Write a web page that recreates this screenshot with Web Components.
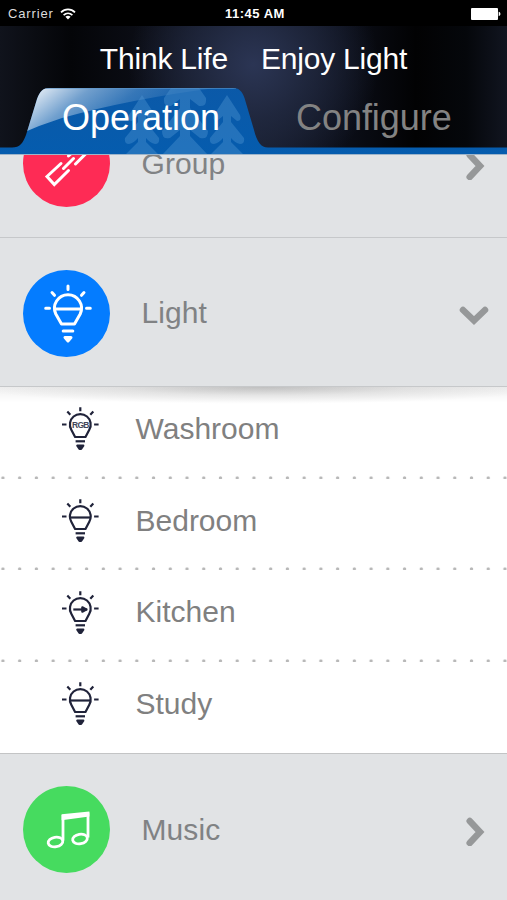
<!DOCTYPE html>
<html lang="en">
<head>
<meta charset="utf-8">
<title>Think Life Enjoy Light</title>
<style>
  html, body {
    margin: 0;
    height: 100%;
    overflow: hidden;
    background: #fff;
    font-family: "Liberation Sans", Arial, sans-serif;
  }
</style>
</head>
<body>
<light-app>
  <status-bar slot="top"></status-bar>
  <app-header slot="top">
    <span slot="title">Think Life</span>
    <span slot="title">Enjoy Light</span>
    <span slot="active">Operation</span>
    <span slot="inactive">Configure</span>
  </app-header>
  <category-row icon="link" color="#fe2b55">Group</category-row>
  <category-row icon="bulb" color="#047cff" open>Light</category-row>
  <light-list>
    <light-row icon="rgb">Washroom</light-row>
    <light-row icon="line">Bedroom</light-row>
    <light-row icon="dimmer">Kitchen</light-row>
    <light-row icon="line">Study</light-row>
  </light-list>
  <category-row icon="music" color="#46db5f">Music</category-row>
</light-app>

<script>
// every element shares the same way of filling its shadow root
class BaseElement extends HTMLElement {
  constructor() {
    super();
    this.shadow = this.attachShadow({ mode: 'open' });
  }
  connectedCallback() {
    const template = document.createElement('template');
    template.innerHTML = this.markup();
    this.shadow.replaceChildren(template.content.cloneNode(true));
  }
}

class LightApp extends BaseElement {
  markup() {
    return `
      <style>
        :host { display: flex; flex-direction: column; height: 900px; width: 507px; overflow: hidden; }
        .top { flex: none; z-index: 1; }
        .scroll { flex: 1; min-height: 0; overflow: hidden; background: #e1e3e5; }
        /* the list is scrolled a little, the first row is half hidden */
        .content { margin-top: -67px; }
      </style>
      <div class="top"><slot name="top"></slot></div>
      <div class="scroll"><div class="content"><slot></slot></div></div>
    `;
  }
}

class StatusBar extends BaseElement {
  markup() {
    return `
      <style>
        :host {
          display: grid;
          grid-template-columns: 1fr auto 1fr;
          align-items: center;
          height: 26px;
          padding: 1px 5px 0 8px;
          box-sizing: border-box;
          background: #000;
          color: #fff;
          font-size: 13px;
        }
        .left { display: flex; align-items: center; gap: 6px; color: #dcdcdc; letter-spacing: 0.85px; }
        .time { font-weight: bold; font-size: 13px; letter-spacing: 0.5px; }
        .battery { justify-self: end; }
        svg { display: block; }
      </style>
      <div class="left">
        <span>Carrier</span>
        <svg width="16" height="12" viewBox="0 0 16 12" fill="none" stroke="#fff" stroke-width="1.7">
          <path d="M1 4.4C5 .4 11 .4 15 4.4"/>
          <path d="M3.6 7.1C6.2 4.6 9.8 4.6 12.4 7.1"/>
          <path d="M8 11.4L5.4 8.8C6.8 7.5 9.2 7.5 10.6 8.8Z" fill="#fff" stroke="none"/>
        </svg>
      </div>
      <div class="time">11:45 AM</div>
      <svg class="battery" width="31" height="12" viewBox="0 0 31 12" fill="#fff">
        <rect x="0" y="0" width="27" height="12" rx="1"/>
        <path d="M27.700 3.800C30 4.400 30 7.600 27.700 8.200Z"/>
      </svg>
    `;
  }
}

class AppHeader extends BaseElement {
  tree(x, y) {
    return `
      <g transform="translate(${x} ${y})">
        <path d="M0 0L13 20Q15 26 10 26L4 21V27L17 43Q18 49 13 49Q8 48 4 43V47L17 60H-17L-4 47V43Q-8 48 -13 49Q-18 49 -17 43L-4 27V21L-10 26Q-15 26 -13 20Z"/>
      </g>`;
  }
  markup() {
    return `
      <style>
        :host {
          display: block;
          position: relative;
          height: 129px;
          background:
            radial-gradient(ellipse 125px 120px at 50% 30%, #2b3554 0%, rgba(34,42,66,.8) 45%, rgba(10,12,20,0) 100%),
            linear-gradient(90deg, #10131c 0, #040508 14%, #0b0d15 28%, #171d2e 50%, #0b0e18 68%, #020203 82%, #05070b 92%, #111520 100%);
          color: #fff;
        }
        .shape { position: absolute; left: 0; top: 0; }
        .inner { position: relative; }
        .title {
          display: flex;
          justify-content: center;
          gap: 33px;
          height: 62px;
          line-height: 66px;
          font-size: 30px;
          letter-spacing: -0.2px;
        }
        .tabs { display: flex; height: 60px; line-height: 60px; font-size: 36px; }
        .tab { padding-left: 62px; width: 235px; box-sizing: border-box; }
        .off { padding-left: 61px; color: #838383; letter-spacing: -0.05px; }
        .tab, .off { flex: none; white-space: nowrap; }
      </style>
      <svg class="shape" width="507" height="129" viewBox="0 26 507 129">
        <defs>
          <linearGradient id="blue" x1="0" y1="0" x2="0" y2="1">
            <stop offset="0" stop-color="#0b59a8"/>
            <stop offset="1" stop-color="#055cae"/>
          </linearGradient>
          <linearGradient id="gloss" gradientUnits="userSpaceOnUse" x1="50" y1="82" x2="104" y2="150">
            <stop offset="0" stop-color="#fff" stop-opacity=".85"/>
            <stop offset=".35" stop-color="#fff" stop-opacity=".42"/>
            <stop offset=".7" stop-color="#fff" stop-opacity=".18"/>
            <stop offset="1" stop-color="#fff" stop-opacity=".08"/>
          </linearGradient>
          <clipPath id="tab">
            <path d="M0 154V147.500H12C20 147.500 23 143 26 135L37 99C40 91 43 88 50 88H233C239 88 242 91 244.500 98L254 130C257 142 261 147.500 268 147.500H507V154Z"/>
          </clipPath>
        </defs>
        <g clip-path="url(#tab)">
          <rect y="86" width="507" height="69" fill="url(#blue)"/>
          <path d="M20 134Q40 125 62 118Q130 99 215 88H20Z" fill="url(#gloss)"/>
          <g fill="#4f97d2" fill-opacity=".4">
            ${this.tree(142, 95)}
            ${this.tree(227, 95)}
            <path d="M171 88H199L206 98Q207 107 199 106L190 99V108L208 131Q208 140 200 138L190 130V136L208 155H162L180 136V130L170 138Q162 140 162 131L180 108V99L171 106Q163 107 164 98Z"/>
          </g>
          <path d="M46 88.500H236" stroke="#5c94c8" stroke-opacity=".6"/>
        </g>
        <path d="M0 154.500H507" stroke="#9db4ca"/>
      </svg>
      <div class="inner">
        <div class="title"><slot name="title"></slot></div>
        <div class="tabs">
          <div class="tab"><slot name="active"></slot></div>
          <div class="off"><slot name="inactive"></slot></div>
        </div>
      </div>
    `;
  }
}

// icons are drawn on an 87px disc
const categoryIcons = {
  link: `
    <g fill="none" stroke="#fff" stroke-width="3" stroke-linecap="round" stroke-linejoin="miter">
      <path d="M38 43.500L24 56.500L31.300 64.500L45.500 50.500"/>
      <path d="M40.500 48.500L50.500 38.500M45.500 36L53 29"/>
      <path d="M52.500 44L63 33.500L56 25.500"/>
    </g>`,
  bulb: `
    <g transform="translate(45 -.5)" fill="none" stroke="#fff" stroke-width="3" stroke-linecap="round" stroke-linejoin="round">
      <path d="M-6.500 54.500L-12.200 44.500A13.500 13.500 0 1 1 12.200 44.500L6.500 54.500Z"/>
      <path d="M-13 39.500H13"/>
      <path d="M0 16.500V20M-16 23L-13.500 25.800M16 23L13.500 25.800M-22.300 38.800H-18.500M22.300 38.800H18.500"/>
      <path d="M-4.800 61.500H4.800"/>
      <path d="M-3 68H3L0 71.500Z" fill="#fff"/>
    </g>`,
  music: `
    <g fill="none" stroke="#fff" stroke-width="2.800">
      <ellipse cx="32.500" cy="56" rx="7.400" ry="4.800" transform="rotate(-10 32.500 56)"/>
      <ellipse cx="57" cy="53" rx="7.400" ry="4.800" transform="rotate(-10 57 53)"/>
      <path d="M40 54.500V29M65 51.500V26.500"/>
      <path d="M38.600 28.300L66.400 25.400V30.500L38.600 34.200Z" fill="#fff" stroke="none"/>
    </g>`,
};

class CategoryRow extends BaseElement {
  markup() {
    const arrow = this.hasAttribute('open')
      ? '<path d="M-11 -5L0 5.500L11 -5"/>'
      : '<path d="M-4.300 -11L6 0L-4.300 11"/>';
    return `
      <style>
        :host {
          display: flex;
          align-items: center;
          height: 149.5px;
          padding: 3px 14px 0 23px;
          box-sizing: border-box;
          background: #e1e3e5;
          border-bottom: 1px solid #c6c8ca;
          color: #808284;
          font-size: 30px;
          letter-spacing: 0.1px;
        }
        .icon { flex: none; margin-right: 31.5px; }
        .label { flex: 1; }
        svg { display: block; }
      </style>
      <svg class="icon" width="87" height="87" viewBox="0 0 87 87">
        <circle cx="43.500" cy="43.500" r="43.500" fill="${this.getAttribute('color')}"/>
        ${categoryIcons[this.getAttribute('icon')]}
      </svg>
      <div class="label"><slot></slot></div>
      <svg width="38" height="32" viewBox="-19 -18 38 32" fill="none" stroke="#969899" stroke-width="6.500" stroke-linecap="round" stroke-linejoin="miter">
        ${arrow}
      </svg>
    `;
  }
}

class LightList extends BaseElement {
  markup() {
    return `
      <style>
        :host {
          display: block;
          border-bottom: 1px solid #c3c4c5;
          background:
            radial-gradient(ellipse 290px 17px at 52% 0, rgba(80,80,80,.3), rgba(120,120,120,.14) 50%, rgba(255,255,255,0)),
            linear-gradient(rgba(0,0,0,.06), rgba(0,0,0,0) 16px) no-repeat,
            #fff;
        }
      </style>
      <slot></slot>
    `;
  }
}

const bulbInside = {
  rgb: '<text x="0" y="3.200" text-anchor="middle" font-size="8.500" font-weight="bold" letter-spacing="-.8" fill="#44475a" stroke="none">RGB</text>',
  line: '<path d="M-10 1H10"/>',
  dimmer: '<path d="M-7 1H7"/><path d="M2 -1.200V3.200L6 1Z" fill="#20233a"/>',
};

class LightRow extends BaseElement {
  markup() {
    return `
      <style>
        :host {
          display: flex;
          align-items: center;
          height: 91.7px;
          padding: 0 0 8px 61px;
          box-sizing: border-box;
          color: #808080;
          font-size: 30px;
          /* dotted separator on the bottom edge */
          background: radial-gradient(circle at 50% 50%, #b8b8b8 1.1px, rgba(184,184,184,0) 2.1px) 11.3px 88.7px / 16.74px 4px repeat-x;
        }
        :host(:last-child) { background: none; height: 90.9px; padding-bottom: 7.2px; }
        svg { flex: none; margin: 0 36.5px 3px 0; font-family: "Liberation Sans", Arial, sans-serif; }
      </style>
      <svg width="38" height="48" viewBox="-19.300 -21.500 38 48" fill="none" stroke="#20233a" stroke-width="2.200" stroke-linejoin="round">
        <path d="M-5.200 12.500L-9 5.200A10.400 10.400 0 1 1 9 5.200L5.200 12.500Z"/>
        ${bulbInside[this.getAttribute('icon')]}
        <path d="M0 -17.300V-13.300M-13 -13L-10 -9.800M13 -13L10 -9.800M-18.300 0H-13.800M18.300 0H13.800"/>
        <path d="M-4.700 16.800H4.700"/>
        <path d="M-3 21.200H3L.8 24.300H-.8Z" fill="#20233a"/>
      </svg>
      <slot></slot>
    `;
  }
}

customElements.define('light-app', LightApp);
customElements.define('status-bar', StatusBar);
customElements.define('app-header', AppHeader);
customElements.define('category-row', CategoryRow);
customElements.define('light-list', LightList);
customElements.define('light-row', LightRow);
</script>
</body>
</html>
